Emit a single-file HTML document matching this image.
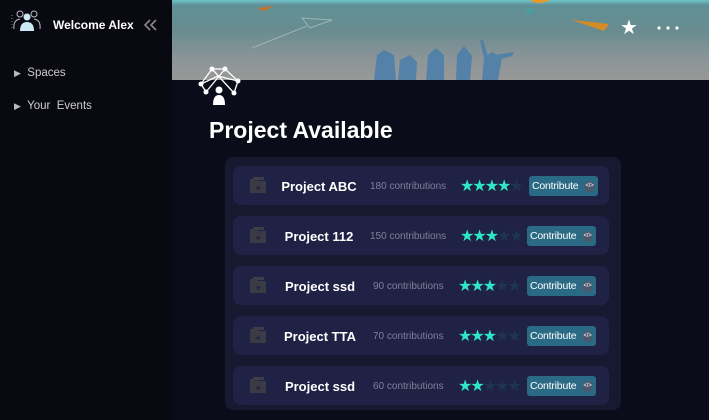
<!DOCTYPE html>
<html><head><meta charset="utf-8"><style>
*{margin:0;padding:0;box-sizing:border-box}
body{width:709px;height:420px;overflow:hidden;background:#0b0c19;font-family:"Liberation Sans",sans-serif;position:relative}
.side{position:absolute;left:0;top:0;width:172px;height:420px;background:#090912}
.banner{position:absolute;left:172px;top:0;width:537px;height:80px;background:linear-gradient(180deg,#6fc4cc 0,#5f9196 5px,#688c90 30px,#8c9598 60px,#989898 80px)}
.txt{position:absolute;color:#fff}
.cont{position:absolute;left:225px;top:157px;width:396px;height:253px;background:#171930;border-radius:8px}
.row{position:absolute;left:233px;width:376px;height:39px;background:#1f2145;border-radius:8px}
.row .ic{position:absolute;left:16px;top:10px}
.row .nm{position:absolute;top:13px;font-weight:bold;font-size:13px;color:#fff;width:90px;text-align:center}
.row .ct{position:absolute;top:15px;font-size:10px;color:#7f819a}
.row .st{position:absolute;top:10px;font-size:16px;letter-spacing:-2px;color:#2fe6c6;font-family:"DejaVu Sans",sans-serif}
.row .st span{color:#1e3550}
.row .bt{position:absolute;top:10px;width:69px;height:20px;background:#2b6a85;border-radius:3px;color:#fff;font-size:10.5px;letter-spacing:-0.2px;line-height:20px;padding-left:3px}
.bt i{position:absolute;right:3px;top:5px;width:11px;height:11px;border-radius:50%;background:#4a5a6e;font-style:normal;font-size:6px;line-height:11px;text-align:center}
</style></head><body>
<div class="side">
<svg style="position:absolute;left:10px;top:9px" width="34" height="24" viewBox="0 0 34 24">
<circle cx="10" cy="5" r="3" fill="none" stroke="#bbb" stroke-width="1"/><circle cx="24" cy="5" r="3" fill="none" stroke="#bbb" stroke-width="1"/>
<circle cx="17" cy="8" r="3.5" fill="#cde9f5"/><path d="M10 22 Q10 13 17 13 Q24 13 24 22Z" fill="#cde9f5"/>
<path d="M4 20 Q3 11 10 10 M30 20 Q31 11 24 10" fill="none" stroke="#bbb" stroke-width="1"/>
<path d="M2 6 V21" stroke="#888" stroke-width="1" stroke-dasharray="1 2"/>
</svg>
<div class="txt" style="left:53px;top:18px;font-size:12px;font-weight:bold">Welcome Alex</div>
<svg style="position:absolute;left:144px;top:19px" width="14" height="12" viewBox="0 0 14 12"><path d="M6 1 L1 6 L6 11 M12 1 L7 6 L12 11" fill="none" stroke="#8a8a8a" stroke-width="1.6"/></svg>
<div class="txt" style="left:14px;top:67px;font-size:11.5px;color:#ccc"><span style="font-size:9px;color:#bbb">&#9654;</span>&nbsp; Spaces</div>
<div class="txt" style="left:14px;top:100px;font-size:11.5px;color:#ccc"><span style="font-size:9px;color:#bbb">&#9654;</span>&nbsp; Your&nbsp; Events</div>
</div>
<div class="banner">
<svg width="537" height="80" style="position:absolute;left:0;top:0">
<path d="M85 8 L102 6 L92 11Z" fill="#c9732a"/>
<path d="M130 18 L160 20 L138 28Z M135 26 L80 48" fill="none" stroke="#9fb3b5" stroke-width="1"/>
<path d="M358 0 Q366 6 378 0Z" fill="#e89b2a"/><rect x="354" y="8" width="7" height="6" fill="#4a9ea0"/>
<path d="M400 20 L437 24 L432 31Z" fill="#d78b24"/>
<g fill="#4a7eaa" opacity=".85">
<path d="M202 80 L205 55 L212 50 L222 55 L224 80Z"/><path d="M226 80 L228 60 L238 55 L245 62 L244 80Z"/>
<path d="M254 80 L256 55 L264 48 L272 55 L272 80Z"/><path d="M284 80 L285 55 L292 46 L300 56 L298 80Z"/>
<path d="M310 80 L312 58 L320 52 L330 58 L326 80Z M322 55 L342 52 L340 56 L324 60Z M312 58 L308 40 L311 40 L316 56Z"/>
</g>
<text x="448" y="34" fill="#fff" font-size="20" font-family="DejaVu Sans">★</text>
<g fill="#fff"><circle cx="487" cy="28" r="1.6"/><circle cx="496" cy="28" r="1.6"/><circle cx="505" cy="28" r="1.6"/></g>
</svg>
</div>
<svg style="position:absolute;left:198px;top:66px" width="44" height="40" viewBox="0 0 44 40">
<g stroke="#fff" stroke-width="1.3" fill="none"><path d="M3 18 L14 3 L27 3 L40 15 M14 3 L36 27 M27 3 L8 26 M3 18 L8 26 M40 15 L36 27 M3 18 L20 10 L40 15"/></g>
<g fill="#fff"><circle cx="14" cy="3" r="2.5"/><circle cx="27" cy="3" r="2.5"/><circle cx="3" cy="18" r="2.5"/><circle cx="40" cy="15" r="2.5"/><circle cx="8" cy="26" r="2.5"/><circle cx="36" cy="27" r="2.5"/>
<circle cx="21" cy="24" r="3.5"/><path d="M15 39 Q15 29 21 29 Q27 29 27 39Z"/></g>
</svg>
<div class="txt" style="left:209px;top:117px;font-size:23px;font-weight:bold">Project Available</div>
<div class="cont"></div>
<div class="row" style="top:166px"><svg class="ic" width="18" height="18" viewBox="0 0 18 18"><path d="M4 1 H15 V4 H4Z" fill="#3d3e48"/><path d="M1 3 H8 L9 5 H17 V17 H1Z" fill="#3a3b44"/><text x="6" y="14" font-size="7" fill="#1f2145">★</text></svg><div class="nm" style="left:41px">Project ABC</div><div class="ct" style="left:137px">180 contributions</div><div class="st" style="left:227px">★★★★<span>★</span></div><div class="bt" style="left:296px">Contribute<i>&lt;/&gt;</i></div></div>
<div class="row" style="top:216px"><svg class="ic" width="18" height="18" viewBox="0 0 18 18"><path d="M4 1 H15 V4 H4Z" fill="#3d3e48"/><path d="M1 3 H8 L9 5 H17 V17 H1Z" fill="#3a3b44"/><text x="6" y="14" font-size="7" fill="#1f2145">★</text></svg><div class="nm" style="left:41px">Project 112</div><div class="ct" style="left:137px">150 contributions</div><div class="st" style="left:227px">★★★<span>★★</span></div><div class="bt" style="left:294px">Contribute<i>&lt;/&gt;</i></div></div>
<div class="row" style="top:266px"><svg class="ic" width="18" height="18" viewBox="0 0 18 18"><path d="M4 1 H15 V4 H4Z" fill="#3d3e48"/><path d="M1 3 H8 L9 5 H17 V17 H1Z" fill="#3a3b44"/><text x="6" y="14" font-size="7" fill="#1f2145">★</text></svg><div class="nm" style="left:42px">Project ssd</div><div class="ct" style="left:140px">90 contributions</div><div class="st" style="left:225px">★★★<span>★★</span></div><div class="bt" style="left:294px">Contribute<i>&lt;/&gt;</i></div></div>
<div class="row" style="top:316px"><svg class="ic" width="18" height="18" viewBox="0 0 18 18"><path d="M4 1 H15 V4 H4Z" fill="#3d3e48"/><path d="M1 3 H8 L9 5 H17 V17 H1Z" fill="#3a3b44"/><text x="6" y="14" font-size="7" fill="#1f2145">★</text></svg><div class="nm" style="left:42px">Project TTA</div><div class="ct" style="left:140px">70 contributions</div><div class="st" style="left:225px">★★★<span>★★</span></div><div class="bt" style="left:294px">Contribute<i>&lt;/&gt;</i></div></div>
<div class="row" style="top:366px"><svg class="ic" width="18" height="18" viewBox="0 0 18 18"><path d="M4 1 H15 V4 H4Z" fill="#3d3e48"/><path d="M1 3 H8 L9 5 H17 V17 H1Z" fill="#3a3b44"/><text x="6" y="14" font-size="7" fill="#1f2145">★</text></svg><div class="nm" style="left:42px">Project ssd</div><div class="ct" style="left:140px">60 contributions</div><div class="st" style="left:225px">★★<span>★★★</span></div><div class="bt" style="left:294px">Contribute<i>&lt;/&gt;</i></div></div>
</body></html>
